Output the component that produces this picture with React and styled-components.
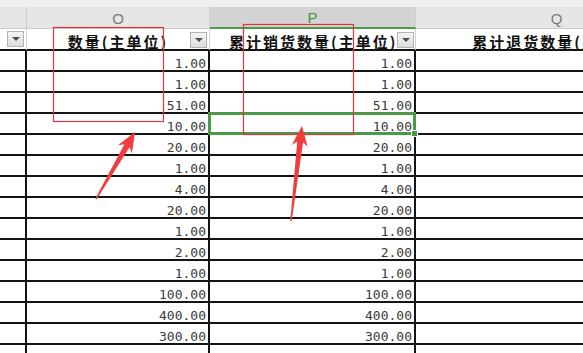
import React from 'react';
import styled, { createGlobalStyle } from 'styled-components';

const GlobalStyle = createGlobalStyle`
  html, body {
    margin: 0;
    padding: 0;
    background: #fff;
    overflow: hidden;
  }
  #root {
    width: 583px;
    height: 353px;
  }
`;

const Sheet = styled.div`
  position: relative;
  width: 583px;
  height: 353px;
  overflow: hidden;
  background: #fff;
`;

const Grid = styled.div`
  display: grid;
  grid-template-columns: 27px 183px 206px 282px;
  grid-template-rows: 7px 22px 22px;
  grid-auto-rows: 21px;
`;

const TopStrip = styled.div`
  grid-column: 1 / -1;
  background: #efefef;
`;

const LetterCell = styled.div`
  box-sizing: border-box;
  display: flex;
  align-items: center;
  justify-content: center;
  background: ${p => (p.active ? '#d3d3d3' : '#e6e6e6')};
  border-right: 1px solid #cfcfcf;
  border-bottom: ${p => (p.active ? '2px solid #4a9c45' : '1px solid #cbcbcb')};
  color: ${p => (p.active ? '#3f9a3f' : '#7b7b7b')};
  font-family: 'Liberation Sans', Arial, sans-serif;
  font-size: 15px;
  padding-top: 1px;
`;

const FilterCell = styled.div`
  box-sizing: border-box;
  display: grid;
  grid-template-columns: ${p => (p.narrow ? '1fr 19px' : '19px 1fr 19px')};
  align-items: center;
  border-right: 1px solid #d2d2d2;
  border-bottom: 2px solid #141414;
  background: #fff;
  min-width: 0;
`;

const HeaderText = styled.span`
  grid-column: 2;
  justify-self: center;
  white-space: nowrap;
  margin-top: 4px;
  font-family: 'Noto Sans CJK SC', 'Noto Sans', sans-serif;
  font-weight: 700;
  font-size: 15px;
  letter-spacing: 2px;
  color: #111;
  text-decoration: underline;
  text-decoration-thickness: 1px;
  text-underline-offset: 1px;
  line-height: 18px;
`;

const DropButton = styled.div`
  grid-column: -2 / -1;
  justify-self: start;
  box-sizing: border-box;
  width: 17px;
  height: 16px;
  border: 1px solid #b4b4b4;
  background: linear-gradient(#f4f4f4, #dedede);
  display: flex;
  align-items: center;
  justify-content: center;

  &::after {
    content: '';
    border-left: 4px solid transparent;
    border-right: 4px solid transparent;
    border-top: 4px solid #4d4d4d;
  }
`;

const DataCell = styled.div`
  box-sizing: border-box;
  display: flex;
  align-items: flex-end;
  justify-content: flex-end;
  padding: 0 2px 0 0;
  border-right: 2px solid #141414;
  border-bottom: 2px solid #141414;
  font-family: 'DejaVu Sans Mono', 'Liberation Mono', monospace;
  font-size: 13px;
  line-height: 12px;
  color: #3a3a3a;
`;

const Selection = styled.div`
  position: absolute;
  left: 208px;
  top: 112px;
  width: 208px;
  height: 23px;
  box-sizing: border-box;
  border: 3px solid #4c9a46;

  &::after {
    content: '';
    position: absolute;
    right: -5px;
    bottom: -5px;
    width: 5px;
    height: 5px;
    background: #4c9a46;
    border: 1px solid #fff;
  }
`;

const Overlay = styled.svg`
  position: absolute;
  left: 0;
  top: 0;
  pointer-events: none;
`;

const values = [
  '1.00', '1.00', '51.00', '10.00', '20.00', '1.00', '4.00',
  '20.00', '1.00', '2.00', '1.00', '100.00', '400.00', '300.00', '',
];

function arrowPoints([tx, ty], [sx, sy]) {
  const dx = tx - sx;
  const dy = ty - sy;
  const len = Math.hypot(dx, dy);
  const ux = dx / len;
  const uy = dy / len;
  const nx = -uy;
  const ny = ux;
  const p = (d, w) => [tx - ux * d + nx * w, ty - uy * d + ny * w];
  const pts = [p(0, 0), p(20, 8), p(16, 3), p(len, 0.7), p(len, -0.7), p(16, -3), p(20, -8)];
  return pts.map(q => q.map(v => v.toFixed(1)).join(',')).join(' ');
}

export default function App() {
  return (
    <>
      <GlobalStyle />
      <Sheet>
        <Grid>
          <TopStrip />

          <LetterCell />
          <LetterCell>O</LetterCell>
          <LetterCell active>P</LetterCell>
          <LetterCell>Q</LetterCell>

          <FilterCell narrow>
            <DropButton />
          </FilterCell>
          <FilterCell>
            <HeaderText>数量(主单位)</HeaderText>
            <DropButton />
          </FilterCell>
          <FilterCell>
            <HeaderText>累计销货数量(主单位)</HeaderText>
            <DropButton />
          </FilterCell>
          <FilterCell>
            <HeaderText>累计退货数量(主单位)</HeaderText>
            <DropButton />
          </FilterCell>

          {values.map((v, i) => (
            <React.Fragment key={i}>
              <DataCell />
              <DataCell>{v}</DataCell>
              <DataCell>{v}</DataCell>
              <DataCell />
            </React.Fragment>
          ))}
        </Grid>

        <Selection />

        <Overlay width="583" height="353" viewBox="0 0 583 353">
          <rect x="53.5" y="27.5" width="110" height="94" fill="none" stroke="#e2363f" strokeWidth="1.2" />
          <rect x="243.5" y="24.5" width="110" height="110" fill="none" stroke="#e2363f" strokeWidth="1.2" />
          <polygon points={arrowPoints([135, 132], [96, 199])} fill="#f03c3c" />
          <polygon points={arrowPoints([302, 126], [291, 221])} fill="#f03c3c" />
        </Overlay>
      </Sheet>
    </>
  );
}
